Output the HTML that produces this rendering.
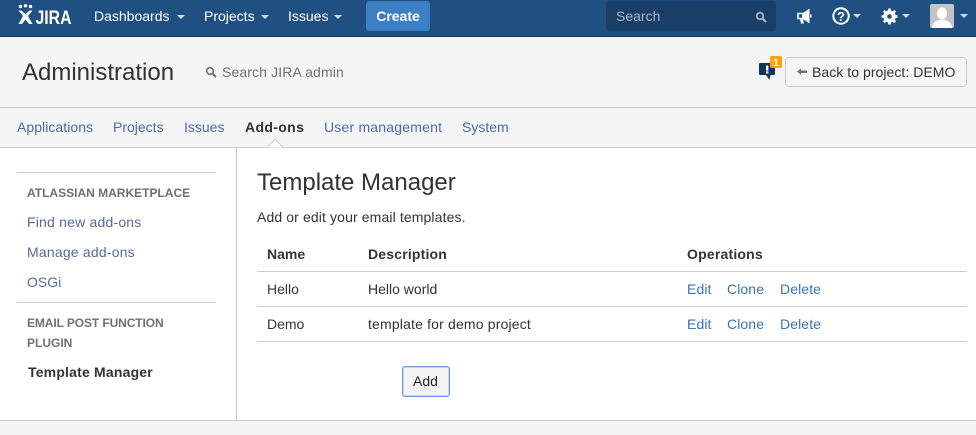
<!DOCTYPE html>
<html><head><meta charset="utf-8"><style>
*{box-sizing:border-box}
html,body{margin:0;padding:0}
body{width:976px;height:435px;position:relative;overflow:hidden;background:#f5f5f5;font:14px/20px "Liberation Sans",Arial,sans-serif;color:#333}
.a{position:absolute;white-space:nowrap}
.l{color:#3b73af;letter-spacing:.1px}
.h{height:1px;background:#ccc;position:absolute}
.nav{color:#fff}
.car{position:absolute;width:0;height:0;border-left:4px solid transparent;border-right:4px solid transparent;border-top:4px solid #d0dbe8}
.sh{color:#707070;font-size:12px;font-weight:bold}
.sl{color:#59689a;letter-spacing:.2px}
.tl{color:#4a6aa5}
</style></head><body>
<div class="a" style="left:0;top:0;width:976px;height:37px;background:#205081;border-bottom:1px solid #1a3a5c"></div>
<svg class="a" style="left:18px;top:4px" width="56" height="22" viewBox="0 0 56 22"><g fill="#fff"><circle cx="2.500" cy="2.500" r="1.700"/><circle cx="7.500" cy="1.800" r="1.700"/><circle cx="12.500" cy="2.500" r="1.700"/><path d="M0.500 6.500h2.800L7.500 10l4.200-3.500h2.800L10 12l4.500 8H11L7.500 15.500 4 20H0.500L5 12z"/></g><text x="17.500" y="20" font-family="Liberation Sans" font-weight="bold" font-size="19" fill="#fff" textLength="36" lengthAdjust="spacingAndGlyphs">JIRA</text></svg>
<div class="a nav" style="left:94px;top:6px">Dashboards</div><div class="car" style="left:177px;top:15px"></div>
<div class="a nav" style="left:204px;top:6px">Projects</div><div class="car" style="left:261px;top:15px"></div>
<div class="a nav" style="left:288px;top:6px">Issues</div><div class="car" style="left:334px;top:15px"></div>
<div class="a" style="left:366px;top:1px;width:64px;height:30px;background:#3b7fc4;border-radius:3px;color:#fff;font-weight:bold;text-align:center;line-height:30px">Create</div>
<div class="a" style="left:606px;top:1px;width:170px;height:30px;background:#1a3f66;border-radius:3px;color:#a5b6c8;padding-left:10px;line-height:30px">Search</div>
<svg class="a" style="left:755px;top:11px" width="12" height="12" viewBox="0 0 12 12"><circle cx="5" cy="5" r="3.300" fill="none" stroke="#a5b6c8" stroke-width="1.800"/><path d="M7.500 7.500L11 11" stroke="#a5b6c8" stroke-width="2.200"/></svg>
<svg class="a" style="left:796px;top:8px" width="16" height="17" viewBox="0 0 16 17"><path d="M2 5.500h5v5H2z" fill="none" stroke="#fff" stroke-width="1.600"/><path d="M7 5.500L13 1.500v13L7 10.500z" fill="#fff" stroke="#fff" stroke-width="1"/><path d="M4 11h3l1 4.500H5z" fill="#fff"/><path d="M14.800 6.500v3" stroke="#fff" stroke-width="1.500"/></svg>
<svg class="a" style="left:832px;top:7px" width="18" height="18" viewBox="0 0 18 18"><circle cx="9" cy="9" r="7.700" fill="none" stroke="#fff" stroke-width="2"/><text x="9" y="13.800" text-anchor="middle" font-family="Liberation Sans" font-weight="bold" font-size="13" fill="#fff">?</text></svg><div class="car" style="left:853px;top:14px"></div>
<svg class="a" style="left:881px;top:8px" width="17" height="17" viewBox="0 0 17 17"><circle cx="8.500" cy="8.500" r="4.500" fill="none" stroke="#fff" stroke-width="3.500"/><path d="M8.500 0.500v16M0.500 8.500h16M2.800 2.800l11.400 11.400M14.200 2.800L2.800 14.200" stroke="#fff" stroke-width="2.600"/><circle cx="8.500" cy="8.500" r="2.300" fill="#205081"/></svg><div class="car" style="left:902px;top:14px"></div>
<svg class="a" style="left:930px;top:4px" width="24" height="24" viewBox="0 0 24 24"><rect width="24" height="24" rx="2" fill="#c4c4c4"/><ellipse cx="12" cy="9.500" rx="5" ry="6" fill="#fff"/><path d="M2 24c0-6 5-7 7-8h6c2 1 7 2 7 8z" fill="#fff"/></svg><div class="car" style="left:960px;top:14px"></div>

<div class="a" style="left:22px;top:58px;font-size:24px;line-height:30px;color:#333">Administration</div>
<svg class="a" style="left:205px;top:66px" width="12" height="12" viewBox="0 0 12 12"><circle cx="5" cy="5" r="3.300" fill="none" stroke="#707070" stroke-width="1.600"/><path d="M7.500 7.500L11 11" stroke="#707070" stroke-width="2"/></svg>
<div class="a" style="left:222px;top:62px;color:#707070;letter-spacing:.12px">Search JIRA admin</div>
<svg class="a" style="left:758px;top:55px" width="25" height="26" viewBox="0 0 25 26"><path d="M2 8h14a1 1 0 0 1 1 1v10a1 1 0 0 1-1 1h-3.500l-1 5-3.500-5H2a1 1 0 0 1-1-1V9a1 1 0 0 1 1-1z" fill="#12355b"/><rect x="8" y="10.500" width="2.400" height="5" fill="#fff"/><rect x="8" y="16.300" width="2.400" height="2.200" fill="#fff"/><rect x="12" y="1" width="12" height="12" rx="2" fill="#f6a50b"/><text x="18" y="11" text-anchor="middle" font-family="Liberation Sans" font-weight="bold" font-size="10" fill="#fff">1</text></svg>
<div class="a" style="left:785px;top:57px;width:182px;height:30px;border:1px solid #ccc;border-radius:3px;line-height:28px;padding-left:26px;letter-spacing:.05px">Back to project: DEMO</div>
<svg class="a" style="left:796px;top:67px" width="12" height="10" viewBox="0 0 12 10"><path d="M1 4.500L5 1.500v2h6v2.500H5v2z" fill="#707070"/></svg>
<div class="h" style="left:0;top:107px;width:976px"></div>

<div class="a tl" style="left:17px;top:117px;letter-spacing:.05px">Applications</div>
<div class="a tl" style="left:113px;top:117px">Projects</div>
<div class="a tl" style="left:184px;top:117px">Issues</div>
<div class="a" style="left:245px;top:117px;font-weight:bold;letter-spacing:.35px">Add-ons</div>
<div class="a tl" style="left:324px;top:117px;letter-spacing:.2px">User management</div>
<div class="a tl" style="left:462px;top:117px">System</div>

<div class="a" style="left:0;top:147px;width:976px;height:274px;background:#fff;border-top:1px solid #ccc;border-bottom:1px solid #ccc"></div>
<svg class="a" style="left:266px;top:138px" width="18" height="10" viewBox="0 0 18 10"><path d="M1 9.500L9 1l8 8.500" fill="#fff" stroke="#ccc"/></svg>
<div class="a" style="left:236px;top:148px;width:1px;height:272px;background:#ccc"></div>

<div class="h" style="left:17px;top:172px;width:199px"></div>
<div class="a sh" style="left:27px;top:183px">ATLASSIAN MARKETPLACE</div>
<div class="a sl" style="left:27px;top:212px">Find new add-ons</div>
<div class="a sl" style="left:27px;top:242px">Manage add-ons</div>
<div class="a sl" style="left:27px;top:272px;letter-spacing:0">OSGi</div>
<div class="h" style="left:17px;top:302px;width:199px"></div>
<div class="a sh" style="left:27px;top:313px;letter-spacing:-.1px">EMAIL POST FUNCTION</div>
<div class="a sh" style="left:27px;top:333px">PLUGIN</div>
<div class="a" style="left:28px;top:362px;font-weight:bold;letter-spacing:.19px">Template Manager</div>

<div class="a" style="left:257px;top:168px;font-size:24px;line-height:30px">Template Manager</div>
<div class="a" style="left:257px;top:207px;letter-spacing:.12px">Add or edit your email templates.</div>
<div class="a" style="left:267px;top:244px;font-weight:bold">Name</div>
<div class="a" style="left:368px;top:244px;font-weight:bold;letter-spacing:.18px">Description</div>
<div class="a" style="left:687px;top:244px;font-weight:bold;letter-spacing:.2px">Operations</div>
<div class="h" style="left:257px;top:271px;width:710px"></div>
<div class="a" style="left:267px;top:279px">Hello</div>
<div class="a" style="left:368px;top:279px">Hello world</div>
<div class="a l" style="left:687px;top:279px">Edit</div>
<div class="a l" style="left:727px;top:279px">Clone</div>
<div class="a l" style="left:780px;top:279px">Delete</div>
<div class="h" style="left:257px;top:306px;width:710px"></div>
<div class="a" style="left:267px;top:314px">Demo</div>
<div class="a" style="left:368px;top:314px;letter-spacing:.17px">template for demo project</div>
<div class="a l" style="left:687px;top:314px">Edit</div>
<div class="a l" style="left:727px;top:314px">Clone</div>
<div class="a l" style="left:780px;top:314px">Delete</div>
<div class="h" style="left:257px;top:341px;width:710px"></div>
<div class="a" style="left:402px;top:366px;width:48px;height:31px;background:#f5f5f5;border:1px solid #6f97da;box-shadow:0 0 0 1px #c3d5f0 inset;border-radius:3px;text-align:center;line-height:29px;color:#222;padding-right:1px">Add</div>
</body></html>
